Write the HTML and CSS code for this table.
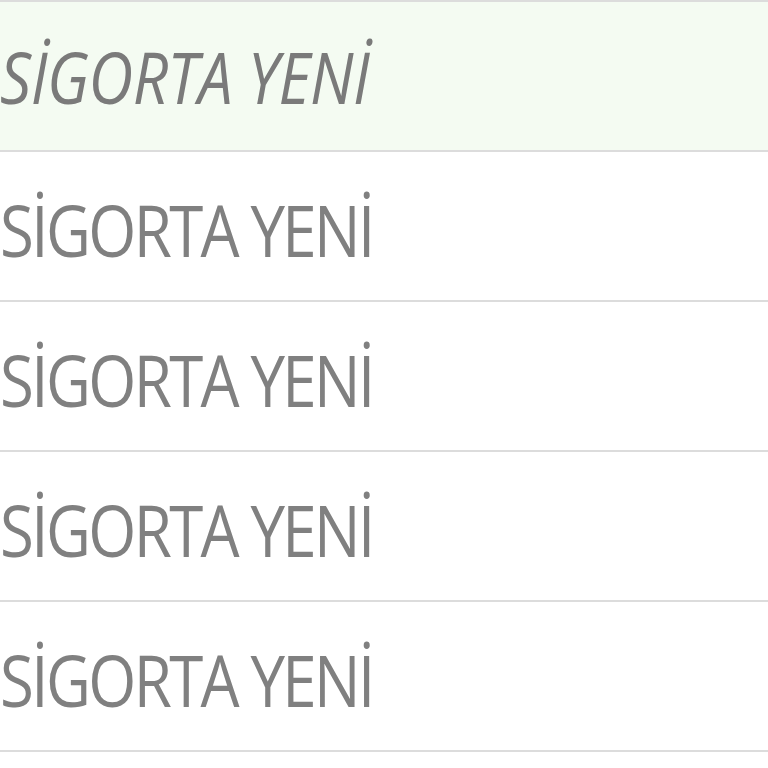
FILE: index.html
```html
<!DOCTYPE html>
<html lang="tr">
<head>
<meta charset="utf-8">
<link rel="stylesheet" href="styles.css">
</head>
<body>
<div class="table">
  <div class="row row-active"><span class="cell cell-italic">SİGORTA YENİ</span></div>
  <div class="row"><span class="cell">SİGORTA YENİ</span></div>
  <div class="row"><span class="cell">SİGORTA YENİ</span></div>
  <div class="row"><span class="cell">SİGORTA YENİ</span></div>
  <div class="row"><span class="cell">SİGORTA YENİ</span></div>
</div>
</body>
</html>
```
FILE: styles.css
```css
html, body {
  margin: 0;
  padding: 0;
  background: #ffffff;
}
.table {
  display: flex;
  flex-direction: column;
  border-top: 2px solid #dcdcdc;
  font-family: "Open Sans", "Noto Sans", sans-serif;
}
.row {
  height: 148px;
  border-bottom: 2px solid #dcdcdc;
  display: flex;
  align-items: center;
}
.row-active {
  background: #f4fbf2;
}
.cell {
  display: inline-block;
  padding-top: 6px;
  font-size: 71px;
  font-weight: 400;
  color: #808080;
  letter-spacing: -3px;
  white-space: nowrap;
  line-height: 1;
  transform: scaleX(0.87);
  transform-origin: 0 50%;
}
.cell-italic {
  font-style: italic;
  letter-spacing: -0.5px;
  color: #7a7a7a;
  padding-top: 0;
}
```
